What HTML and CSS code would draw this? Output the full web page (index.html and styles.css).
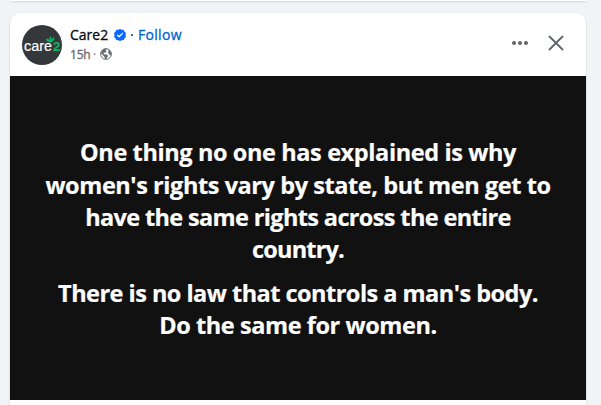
FILE: index.html
```html
<!DOCTYPE html>
<html lang="en">
<head>
<meta charset="utf-8">
<title>Care2</title>
<link rel="stylesheet" href="styles.css">
</head>
<body>
<div class="feed">
  <div class="card card-previous"></div>
  <article class="card post">
    <header class="post-header">
      <svg class="avatar" viewBox="0 0 40 40">
        <circle cx="20" cy="20" r="20" fill="#34383b"/>
        <text class="logo-text" x="2" y="25.5" textLength="28" lengthAdjust="spacingAndGlyphs">care<tspan class="logo-two"></tspan></text>
        <text class="logo-two" x="31" y="25.5" textLength="7.5" lengthAdjust="spacingAndGlyphs">2</text>
        <path d="M28.5 17.5Q23.5 17 24 13.5Q26 13.5 27.5 15Q26.8 12.5 28.3 11Q29.8 12.8 29.3 14.8Q30.5 12.3 32.5 12.5Q32.5 16.5 28.5 17.5Z" fill="#10b060"/>
      </svg>
      <div class="meta">
        <div class="name-row">
          <span class="name">Care2</span>
          <svg class="verified" viewBox="0 0 12 12">
            <path d="M6 0L7.6 1L9.6 1L10.3 2.8L11.8 4L11.3 6L11.8 8L10.3 9.2L9.6 11L7.6 11L6 12L4.4 11L2.4 11L1.7 9.2L.2 8L.7 6L.2 4L1.7 2.8L2.4 1L4.4 1Z" fill="#0866ff" stroke="#0866ff" stroke-width=".4" stroke-linejoin="round"/>
            <path d="M3.5 6.2L5.2 7.8L8.5 4.4" fill="none" stroke="#fff" stroke-width="1.3" stroke-linecap="round" stroke-linejoin="round"/>
          </svg>
          <span class="dot">·</span>
          <span class="follow">Follow</span>
        </div>
        <div class="time-row">
          <span class="time">15h</span>
          <span class="time-dot">·</span>
          <svg class="globe" viewBox="0 0 12 12">
            <circle cx="6" cy="6" r="5.4" fill="#fff" stroke="#6b6e73"/>
            <path d="M1 4Q2.3 1 5.3.8L6.8 1.5L5.8 2.6L6.6 3.6L5 4.8L3.2 5L4.2 6.2L6.8 6.4L8.2 7.8L7 9.4L6.2 11.2Q5 11 4.8 10.2L4.2 8.4L1.2 5.6Z" fill="#6b6e73"/>
            <path d="M8.2 1.2Q10.8 2.2 11.3 5.4L10.6 7.6L9.4 7L8.8 5.4L7.5 4.6L8.6 3.4Z" fill="#6b6e73"/>
          </svg>
        </div>
      </div>
      <div class="actions">
        <svg class="more" viewBox="0 0 16 4" fill="#606367"><circle cx="2" cy="2" r="2"/><circle cx="8" cy="2" r="2"/><circle cx="14" cy="2" r="2"/></svg>
        <svg class="close" viewBox="0 0 16 16"><path d="M1.5 1.5L14.5 14.5M14.5 1.5L1.5 14.5" fill="none" stroke="#606367" stroke-width="1.8" stroke-linecap="round"/></svg>
      </div>
    </header>
    <div class="post-body">
      <p class="statement">
        <span class="line line-1">One thing no one has explained is why</span>
        <span class="line line-2">women's rights vary by state, but men get to</span>
        <span class="line line-3">have the same rights across the entire</span>
        <span class="line line-4">country.</span>
      </p>
      <p class="statement">
        <span class="line line-5">There is no law that controls a man's body.</span>
        <span class="line line-6">Do the same for women.</span>
      </p>
    </div>
  </article>
</div>
</body>
</html>
```
FILE: styles.css
```css
body {
  margin: 0;
  height: 405px;
  overflow: hidden;
  background: #f2f3f7;
  font-family: "Open Sans", "Noto Sans", sans-serif;
}
.feed {
  width: 576px;
  margin-left: 10px;
}
.card {
  background: #fff;
  box-shadow: 0 1px 2px rgba(0, 0, 0, .2);
}
.card-previous {
  height: 1px;
  margin-bottom: 12px;
  border-radius: 0 0 8px 8px;
}
.post {
  height: 392px;
  border-radius: 10px 10px 0 0;
}
.post-header {
  display: flex;
  height: 63px;
  padding: 0 22px 0 12px;
  box-sizing: border-box;
}
.avatar {
  width: 40px;
  height: 40px;
  margin-top: 12px;
}
.logo-text, .logo-two {
  font-family: "Liberation Sans", sans-serif;
  font-size: 15px;
  fill: #fff;
  stroke: #fff;
  stroke-width: .2px;
}
.logo-two {
  font-size: 13px;
  font-weight: 700;
  fill: #10b060;
  stroke: #10b060;
}
.meta {
  margin: 12px 0 0 8px;
}
.name-row, .time-row {
  display: flex;
  align-items: center;
  height: 20px;
  white-space: nowrap;
}
.name-row {
  height: 19px;
  font-size: 14px;
  line-height: 19px;
}
.name {
  width: 39px;
  color: #080809;
  -webkit-text-stroke: .3px;
}
.verified {
  width: 12px;
  height: 12px;
  margin-left: 5px;
}
.dot {
  width: 4px;
  margin: 0 4px;
}
.follow {
  color: #0064d1;
  letter-spacing: .3px;
  -webkit-text-stroke: .3px;
}
.time-row {
  color: #65686c;
  font-size: 12px;
}
.time {
  width: 20px;
  letter-spacing: -.2px;
  -webkit-text-stroke: .3px;
}
.time-dot {
  width: 4px;
  margin: 0 3px;
}
.globe {
  width: 12px;
  height: 12px;
}
.actions {
  display: flex;
  align-items: center;
  gap: 20px;
  height: 60px;
  margin-left: auto;
}
.more {
  width: 16px;
  height: 4px;
}
.close {
  width: 16px;
  height: 16px;
}
.post-body {
  height: 324px;
  padding-top: 60.4px;
  box-sizing: border-box;
  background: #111;
  color: #fff;
}
.statement {
  margin: 0 0 11.6px;
  font-size: 23.5px;
  font-weight: 700;
  line-height: 32.2px;
  text-align: center;
  -webkit-text-stroke: .2px;
}
.line {
  display: block;
  white-space: nowrap;
}
.line-1 { letter-spacing: -.39px; }
.line-2 { letter-spacing: -.43px; }
.line-3 { letter-spacing: -.64px; }
.line-4 { letter-spacing: -.8px; }
.line-5 { letter-spacing: -.52px; }
.line-6 { letter-spacing: -.43px; }
```
